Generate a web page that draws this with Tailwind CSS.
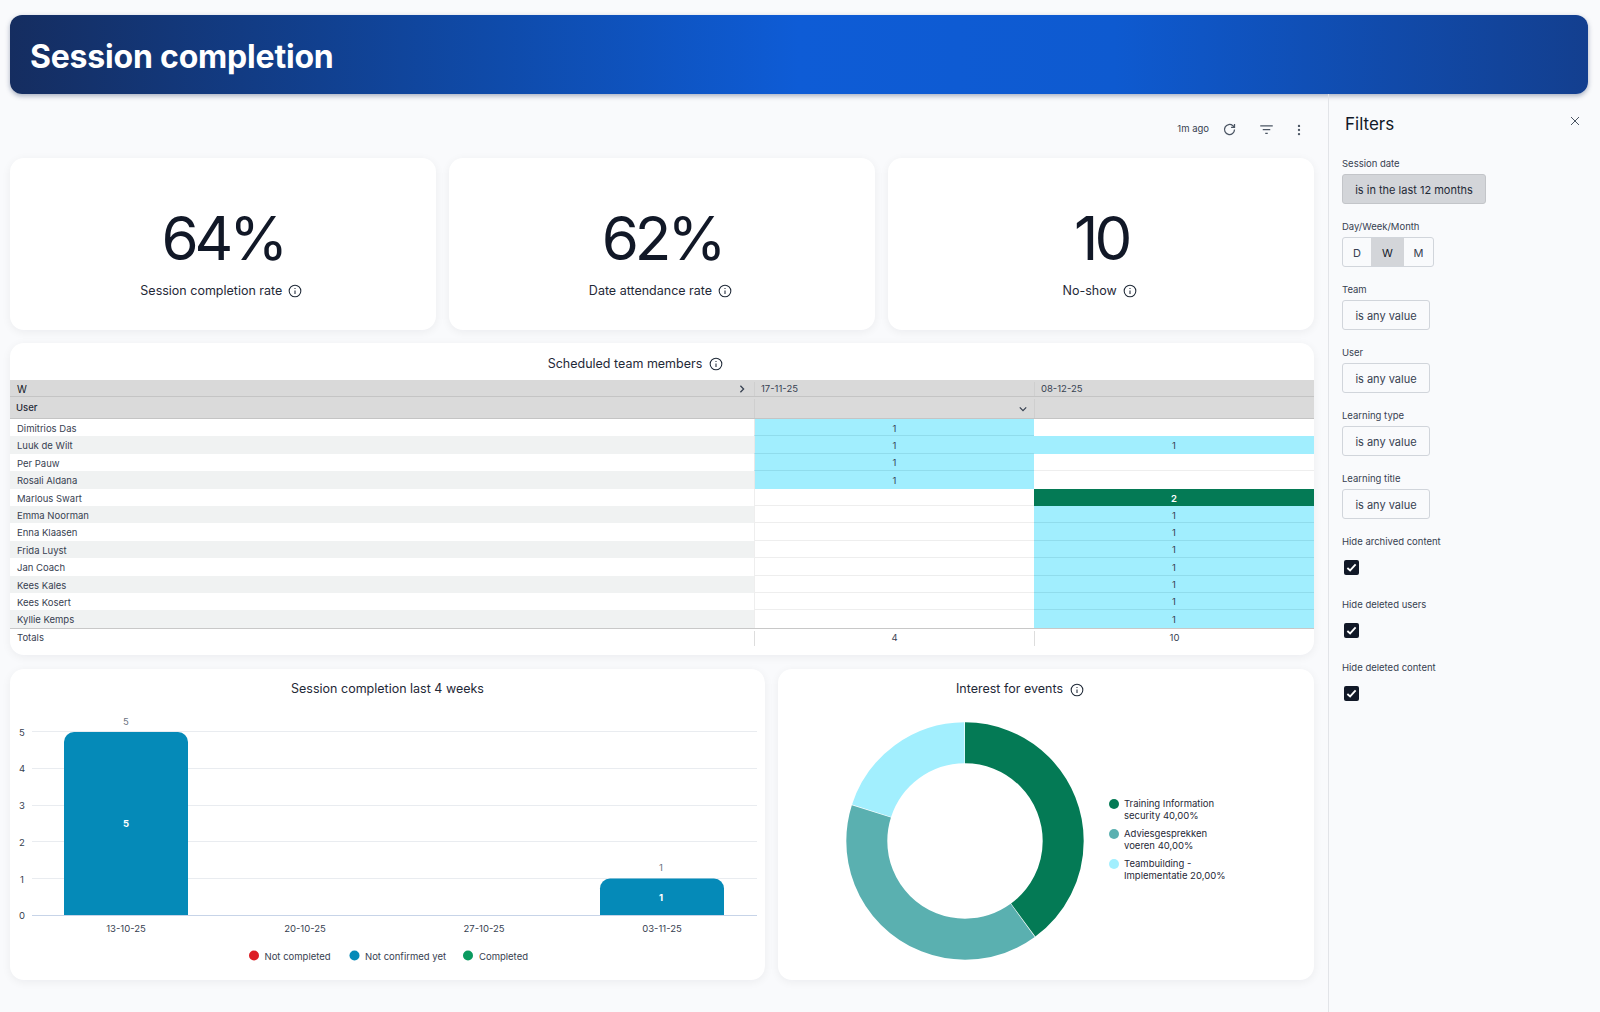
<!DOCTYPE html>
<html lang="en">
<head>
    <meta charset="UTF-8">
    <meta name="viewport" content="width=device-width, initial-scale=1.0">
    <script src="https://cdn.jsdelivr.net/npm/@tailwindcss/browser@4"></script>
    <title>Session completion</title>
</head>
<body class="bg-[#f9fafc] text-[#111827] font-[Inter,sans-serif] h-[1012px] overflow-hidden">
    <div class="pt-[15px] px-[10px] pr-[12px]">
        <header class="h-[79px] rounded-[12px] flex items-center pl-[20px] pt-[5px] shadow-[0_2px_5px_rgba(15,35,80,0.35)] bg-[linear-gradient(90deg,#152d60_0%,#0f4aa8_30%,#0e5cd6_50%,#0e5ad0_70%,#133f8f_100%)]">
            <h1 class="text-[32px] font-bold text-white tracking-[-0.2px]">Session completion</h1>
        </header>
    </div>

    <div class="flex">
        <main class="w-[1328px] pl-[10px] pr-[14px]">
            <!-- toolbar -->
            <div class="h-[64px] flex items-center justify-end pt-[7px] pr-[8px] text-[#374151]">
                <span class="text-[9.5px] mr-[13px]">1m ago</span>
                <svg class="w-[15px] h-[15px] mr-[22px]" viewBox="0 0 24 24" fill="none" stroke="#4b5563" stroke-width="2"><path d="M20 12a8 8 0 1 1-2.6-5.9L20 8.5"/><path d="M20 3v5.5h-5.5"/></svg>
                <svg class="w-[15px] h-[15px] mr-[18px]" viewBox="0 0 24 24" fill="none" stroke="#4b5563" stroke-width="2"><path d="M2 6h20M6 12h12M10 18h4"/></svg>
                <svg class="w-[14px] h-[14px]" viewBox="0 0 24 24" fill="#4b5563"><circle cx="12" cy="5" r="2"/><circle cx="12" cy="12" r="2"/><circle cx="12" cy="19" r="2"/></svg>
            </div>

            <!-- kpi cards -->
            <div class="grid grid-cols-3 gap-[13.5px]">
                <div class="h-[172px] bg-white rounded-[14px] shadow-[0_2px_10px_rgba(17,24,39,0.06)] flex flex-col items-center pt-[45px]">
                    <p class="text-[60px] leading-[70px] font-normal tracking-[-4px]">64%</p>
                    <p class="mt-[9px] pr-[3px] text-[12.5px] leading-[18px] text-[#1f2937] flex items-center gap-[6px]">Session completion rate
                        <svg class="w-[14px] h-[14px]" viewBox="0 0 24 24" fill="none" stroke="#1f2937" stroke-width="1.8"><circle cx="12" cy="12" r="10"/><path d="M12 11v6M12 7v1.5"/></svg>
                    </p>
                </div>
                <div class="h-[172px] bg-white rounded-[14px] shadow-[0_2px_10px_rgba(17,24,39,0.06)] flex flex-col items-center pt-[45px]">
                    <p class="text-[60px] leading-[70px] font-normal tracking-[-4px]">62%</p>
                    <p class="mt-[9px] pr-[3px] text-[12.5px] leading-[18px] text-[#1f2937] flex items-center gap-[6px]">Date attendance rate
                        <svg class="w-[14px] h-[14px]" viewBox="0 0 24 24" fill="none" stroke="#1f2937" stroke-width="1.8"><circle cx="12" cy="12" r="10"/><path d="M12 11v6M12 7v1.5"/></svg>
                    </p>
                </div>
                <div class="h-[172px] bg-white rounded-[14px] shadow-[0_2px_10px_rgba(17,24,39,0.06)] flex flex-col items-center pt-[45px]">
                    <p class="text-[60px] leading-[70px] font-normal tracking-[-4px]">10</p>
                    <p class="mt-[9px] pr-[3px] text-[12.5px] leading-[18px] text-[#1f2937] flex items-center gap-[6px]">No-show
                        <svg class="w-[14px] h-[14px]" viewBox="0 0 24 24" fill="none" stroke="#1f2937" stroke-width="1.8"><circle cx="12" cy="12" r="10"/><path d="M12 11v6M12 7v1.5"/></svg>
                    </p>
                </div>
            </div>

            <!-- table -->
            <section class="mt-[13px] h-[312px] bg-white rounded-[14px] shadow-[0_2px_10px_rgba(17,24,39,0.06)] overflow-hidden text-[9.5px] text-[#374151]">
                <div class="h-[37px] flex items-center justify-center gap-[7px] text-[12.5px] text-[#1f2937] pt-[5px] pr-[53px]">Scheduled team members
                    <svg class="w-[14px] h-[14px]" viewBox="0 0 24 24" fill="none" stroke="#1f2937" stroke-width="1.8"><circle cx="12" cy="12" r="10"/><path d="M12 11v6M12 7v1.5"/></svg>
                </div>

                <div class="h-[17px] flex bg-[#d9d9d9] border-b border-[#c4c4c4] pt-[2px]">
                    <div class="w-[744px] px-[7px] flex items-center justify-between text-[#111827] text-[10px]">W
                        <svg class="w-[8px] h-[8px] mr-[1px]" viewBox="0 0 10 10" fill="none" stroke="#374151" stroke-width="1.6"><path d="M3 1l4 4-4 4"/></svg>
                    </div>
                    <div class="w-[280px] px-[6px] flex items-center border-l border-[#cfcfcf]">17-11-25</div>
                    <div class="w-[280px] px-[6px] flex items-center border-l border-[#cfcfcf]">08-12-25</div>
                </div>
                <div class="h-[22px] flex bg-[#dadada] border-b border-[#c4c4c4] pt-[2px]">
                    <div class="w-[744px] px-[6px] flex items-center font-medium text-[#1f2937]">User</div>
                    <div class="w-[280px] px-[7px] flex items-center justify-end border-l border-[#cfcfcf]">
                        <svg class="w-[8px] h-[8px]" viewBox="0 0 10 10" fill="none" stroke="#374151" stroke-width="1.6"><path d="M1 3l4 4 4-4"/></svg>
                    </div>
                    <div class="w-[280px] border-l border-[#cfcfcf]"></div>
                </div>

                <div class="h-[17.4px] flex">
                    <div class="w-[744px] pl-[7px] pt-[3px] flex items-center">Dimitrios Das</div>
                    <div class="w-[280px] pt-[3px] flex items-center justify-center bg-[#a1eefe] border-b border-[#90dcec] border-l border-l-[#e8e8e8]">1</div>
                    <div class="w-[280px] bg-white"></div>
                </div>
                <div class="h-[17.4px] flex">
                    <div class="w-[744px] pl-[7px] pt-[3px] flex items-center bg-[#f0f2f2]">Luuk de Wilt</div>
                    <div class="w-[280px] pt-[3px] flex items-center justify-center bg-[#a1eefe] border-b border-[#90dcec] border-l border-l-[#e8e8e8]">1</div>
                    <div class="w-[280px] pt-[3px] flex items-center justify-center bg-[#a1eefe]">1</div>
                </div>
                <div class="h-[17.4px] flex">
                    <div class="w-[744px] pl-[7px] pt-[3px] flex items-center">Per Pauw</div>
                    <div class="w-[280px] pt-[3px] flex items-center justify-center bg-[#a1eefe] border-b border-[#90dcec] border-l border-l-[#e8e8e8]">1</div>
                    <div class="w-[280px] bg-white border-b border-[#eeeeee]"></div>
                </div>
                <div class="h-[17.4px] flex">
                    <div class="w-[744px] pl-[7px] pt-[3px] flex items-center bg-[#f0f2f2]">Rosali Aldana</div>
                    <div class="w-[280px] pt-[3px] flex items-center justify-center bg-[#a1eefe] border-l border-l-[#e8e8e8]">1</div>
                    <div class="w-[280px] bg-white"></div>
                </div>
                <div class="h-[17.4px] flex">
                    <div class="w-[744px] pl-[7px] pt-[3px] flex items-center">Marlous Swart</div>
                    <div class="w-[280px] bg-white border-b border-[#eeeeee] border-l border-l-[#eeeeee]"></div>
                    <div class="w-[280px] pt-[3px] flex items-center justify-center bg-[#047a55] text-white font-semibold">2</div>
                </div>
                <div class="h-[17.4px] flex">
                    <div class="w-[744px] pl-[7px] pt-[3px] flex items-center bg-[#f0f2f2]">Emma Noorman</div>
                    <div class="w-[280px] bg-white border-b border-[#eeeeee] border-l border-l-[#eeeeee]"></div>
                    <div class="w-[280px] pt-[3px] flex items-center justify-center bg-[#a1eefe] border-b border-[#90dcec]">1</div>
                </div>
                <div class="h-[17.4px] flex">
                    <div class="w-[744px] pl-[7px] pt-[3px] flex items-center">Enna Klaasen</div>
                    <div class="w-[280px] bg-white border-b border-[#eeeeee] border-l border-l-[#eeeeee]"></div>
                    <div class="w-[280px] pt-[3px] flex items-center justify-center bg-[#a1eefe] border-b border-[#90dcec]">1</div>
                </div>
                <div class="h-[17.4px] flex">
                    <div class="w-[744px] pl-[7px] pt-[3px] flex items-center bg-[#f0f2f2]">Frida Luyst</div>
                    <div class="w-[280px] bg-white border-b border-[#eeeeee] border-l border-l-[#eeeeee]"></div>
                    <div class="w-[280px] pt-[3px] flex items-center justify-center bg-[#a1eefe] border-b border-[#90dcec]">1</div>
                </div>
                <div class="h-[17.4px] flex">
                    <div class="w-[744px] pl-[7px] pt-[3px] flex items-center">Jan Coach</div>
                    <div class="w-[280px] bg-white border-b border-[#eeeeee] border-l border-l-[#eeeeee]"></div>
                    <div class="w-[280px] pt-[3px] flex items-center justify-center bg-[#a1eefe] border-b border-[#90dcec]">1</div>
                </div>
                <div class="h-[17.4px] flex">
                    <div class="w-[744px] pl-[7px] pt-[3px] flex items-center bg-[#f0f2f2]">Kees Kales</div>
                    <div class="w-[280px] bg-white border-b border-[#eeeeee] border-l border-l-[#eeeeee]"></div>
                    <div class="w-[280px] pt-[3px] flex items-center justify-center bg-[#a1eefe] border-b border-[#90dcec]">1</div>
                </div>
                <div class="h-[17.4px] flex">
                    <div class="w-[744px] pl-[7px] pt-[3px] flex items-center">Kees Kosert</div>
                    <div class="w-[280px] bg-white border-b border-[#eeeeee] border-l border-l-[#eeeeee]"></div>
                    <div class="w-[280px] pt-[3px] flex items-center justify-center bg-[#a1eefe] border-b border-[#90dcec]">1</div>
                </div>
                <div class="h-[17.4px] flex">
                    <div class="w-[744px] pl-[7px] pt-[3px] flex items-center bg-[#f0f2f2]">Kyllie Kemps</div>
                    <div class="w-[280px] bg-white border-l border-l-[#eeeeee]"></div>
                    <div class="w-[280px] pt-[3px] flex items-center justify-center bg-[#a1eefe]">1</div>
                </div>

                <div class="h-[18px] flex border-t border-[#c8c8c8] pt-[2px]">
                    <div class="w-[744px] pl-[7px] flex items-center">Totals</div>
                    <div class="w-[280px] flex items-center justify-center border-l border-[#dddddd]">4</div>
                    <div class="w-[280px] flex items-center justify-center border-l border-[#dddddd]">10</div>
                </div>
            </section>

            <!-- charts -->
            <div class="mt-[14px] flex gap-[13px]">
                <section class="w-[755px] h-[311px] bg-white rounded-[14px] shadow-[0_2px_10px_rgba(17,24,39,0.06)]">
                    <h2 class="h-[31px] pt-[11px] text-[12.5px] leading-[18px] text-center text-[#1f2937]">Session completion last 4 weeks</h2>
                    <svg class="block" width="755" height="280" viewBox="0 0 755 280" font-family="Inter, sans-serif" font-size="9.5" dominant-baseline="central">
                        <g stroke="#e9ecf0" stroke-width="1">
                            <path d="M22 31.5H747M22 68.5H747M22 105.5H747M22 141.5H747M22 178.5H747"/>
                        </g>
                        <path d="M22 215.5H747" stroke="#c7d4e8"/>
                        <g fill="#374151" text-anchor="middle" dominant-baseline="central">
                            <text x="12" y="32">5</text>
                            <text x="12" y="68">4</text>
                            <text x="12" y="105">3</text>
                            <text x="12" y="142">2</text>
                            <text x="12" y="179">1</text>
                            <text x="12" y="215">0</text>
                        </g>
                        <path d="M54 215V42a10 10 0 0 1 10-10h104a10 10 0 0 1 10 10V215Z" fill="#058ab8"/>
                        <path d="M590 215V188.5a10 10 0 0 1 10-10h104a10 10 0 0 1 10 10V215Z" fill="#058ab8"/>
                        <g text-anchor="middle" dominant-baseline="central">
                            <text x="116" y="21.5" fill="#6b7280">5</text>
                            <text x="651" y="167.5" fill="#6b7280">1</text>
                            <text x="116" y="123" fill="#ffffff" font-weight="700">5</text>
                            <text x="651" y="197" fill="#ffffff" font-weight="700">1</text>
                            <g fill="#374151">
                                <text x="116" y="228">13-10-25</text>
                                <text x="295" y="228">20-10-25</text>
                                <text x="474" y="228">27-10-25</text>
                                <text x="652" y="228">03-11-25</text>
                            </g>
                        </g>
                        <circle cx="244" cy="255.5" r="5" fill="#dc1f26"/>
                        <circle cx="344.5" cy="255.5" r="5" fill="#058ab8"/>
                        <circle cx="458" cy="255.5" r="5" fill="#0a9a5f"/>
                        <g fill="#374151" dominant-baseline="central">
                            <text x="254.5" y="256">Not completed</text>
                            <text x="355" y="256">Not confirmed yet</text>
                            <text x="469" y="256">Completed</text>
                        </g>
                    </svg>
                </section>

                <section class="w-[536px] h-[311px] bg-white rounded-[14px] shadow-[0_2px_10px_rgba(17,24,39,0.06)]">
                    <h2 class="h-[31px] pt-[11px] pr-[52px] text-[12.5px] leading-[18px] text-[#1f2937] flex justify-center gap-[7px]">Interest for events
                        <svg class="w-[14px] h-[14px] mt-[3px]" viewBox="0 0 24 24" fill="none" stroke="#1f2937" stroke-width="1.8"><circle cx="12" cy="12" r="10"/><path d="M12 11v6M12 7v1.5"/></svg>
                    </h2>
                    <div class="flex items-center pl-[67px] pt-[21px]">
                        <svg class="block shrink-0" width="240" height="240" viewBox="0 0 240 240">
                            <g fill="none" stroke-width="41" transform="rotate(-90 120 120)">
                                <circle cx="120" cy="120" r="98.2" pathLength="100" stroke="#047a55" stroke-dasharray="39.9 60.1"/>
                                <circle cx="120" cy="120" r="98.2" pathLength="100" stroke="#5ab0b0" stroke-dasharray="39.9 60.1" stroke-dashoffset="-40"/>
                                <circle cx="120" cy="120" r="98.2" pathLength="100" stroke="#a2effe" stroke-dasharray="19.9 80.1" stroke-dashoffset="-80"/>
                            </g>
                        </svg>
                        <ul class="ml-[24px] mb-[2px] text-[9.5px] leading-[12.5px] text-[#1f2937] flex flex-col gap-[5px]">
                            <li class="flex gap-[5px]"><span class="w-[10px] h-[10px] mt-[1px] rounded-full bg-[#047a55] shrink-0"></span><span class="w-[105px]">Training Information security 40,00%</span></li>
                            <li class="flex gap-[5px]"><span class="w-[10px] h-[10px] mt-[1px] rounded-full bg-[#5ab0b0] shrink-0"></span><span class="w-[105px]">Adviesgesprekken voeren 40,00%</span></li>
                            <li class="flex gap-[5px]"><span class="w-[10px] h-[10px] mt-[1px] rounded-full bg-[#a2effe] shrink-0"></span><span class="w-[105px]">Teambuilding - Implementatie 20,00%</span></li>
                        </ul>
                    </div>
                </section>
            </div>
        </main>

        <!-- filters -->
        <aside class="relative w-[272px] h-[918px] border-l border-[#e2e4e8] pl-[13px] text-[9.5px] text-[#374151]">
            <h2 class="ml-[3px] mt-[18px] h-[26px] text-[17px] leading-[24px] text-[#111827]">Filters</h2>
            <svg class="absolute right-[19px] top-[21px] w-[12px] h-[12px]" viewBox="0 0 12 12" fill="none" stroke="#4b5563" stroke-width="1"><path d="M2 2l8 8M10 2l-8 8"/></svg>

            <div class="mt-[18px] flex flex-col">
                <div class="h-[63px]">
                    <p class="h-[18px] leading-[16px]">Session date</p>
                    <div class="w-[144px] h-[30px] pt-[3px] bg-[#d3d5d9] border border-[#c3c5c9] rounded-[3px] flex items-center justify-center text-[11px] text-[#1f2937]">is in the last 12 months</div>
                </div>
                <div class="h-[63px]">
                    <p class="h-[18px] leading-[16px]">Day/Week/Month</p>
                    <div class="w-[92px] h-[30px] flex border border-[#d1d5db] rounded-[3px] text-[11px] overflow-hidden">
                        <span class="w-[28px] pt-[2px] flex items-center justify-center">D</span>
                        <span class="w-[33px] pt-[2px] flex items-center justify-center bg-[#d3d5d9] text-[#111827]">W</span>
                        <span class="flex-1 pt-[2px] flex items-center justify-center">M</span>
                    </div>
                </div>
                <div class="h-[63px]">
                    <p class="h-[18px] leading-[16px]">Team</p>
                    <div class="w-[88px] h-[30px] pt-[3px] border border-[#d1d5db] rounded-[3px] flex items-center justify-center text-[11px]">is any value</div>
                </div>
                <div class="h-[63px]">
                    <p class="h-[18px] leading-[16px]">User</p>
                    <div class="w-[88px] h-[30px] pt-[3px] border border-[#d1d5db] rounded-[3px] flex items-center justify-center text-[11px]">is any value</div>
                </div>
                <div class="h-[63px]">
                    <p class="h-[18px] leading-[16px]">Learning type</p>
                    <div class="w-[88px] h-[30px] pt-[3px] border border-[#d1d5db] rounded-[3px] flex items-center justify-center text-[11px]">is any value</div>
                </div>
                <div class="h-[63px]">
                    <p class="h-[18px] leading-[16px]">Learning title</p>
                    <div class="w-[88px] h-[30px] pt-[3px] border border-[#d1d5db] rounded-[3px] flex items-center justify-center text-[11px]">is any value</div>
                </div>
                <div class="h-[63px]">
                    <p class="h-[15px] leading-[16px]">Hide archived content</p>
                    <div class="ml-[2px] mt-[11px] w-[15px] h-[15px] rounded-[2px] bg-[#111827] flex items-center justify-center">
                        <svg class="w-[11px] h-[11px]" viewBox="0 0 12 12" fill="none" stroke="#ffffff" stroke-width="2"><path d="M1.5 6.5l3 2.7 6-6.5"/></svg>
                    </div>
                </div>
                <div class="h-[63px]">
                    <p class="h-[15px] leading-[16px]">Hide deleted users</p>
                    <div class="ml-[2px] mt-[11px] w-[15px] h-[15px] rounded-[2px] bg-[#111827] flex items-center justify-center">
                        <svg class="w-[11px] h-[11px]" viewBox="0 0 12 12" fill="none" stroke="#ffffff" stroke-width="2"><path d="M1.5 6.5l3 2.7 6-6.5"/></svg>
                    </div>
                </div>
                <div class="h-[63px]">
                    <p class="h-[15px] leading-[16px]">Hide deleted content</p>
                    <div class="ml-[2px] mt-[11px] w-[15px] h-[15px] rounded-[2px] bg-[#111827] flex items-center justify-center">
                        <svg class="w-[11px] h-[11px]" viewBox="0 0 12 12" fill="none" stroke="#ffffff" stroke-width="2"><path d="M1.5 6.5l3 2.7 6-6.5"/></svg>
                    </div>
                </div>
            </div>
        </aside>
    </div>
</body>
</html>
